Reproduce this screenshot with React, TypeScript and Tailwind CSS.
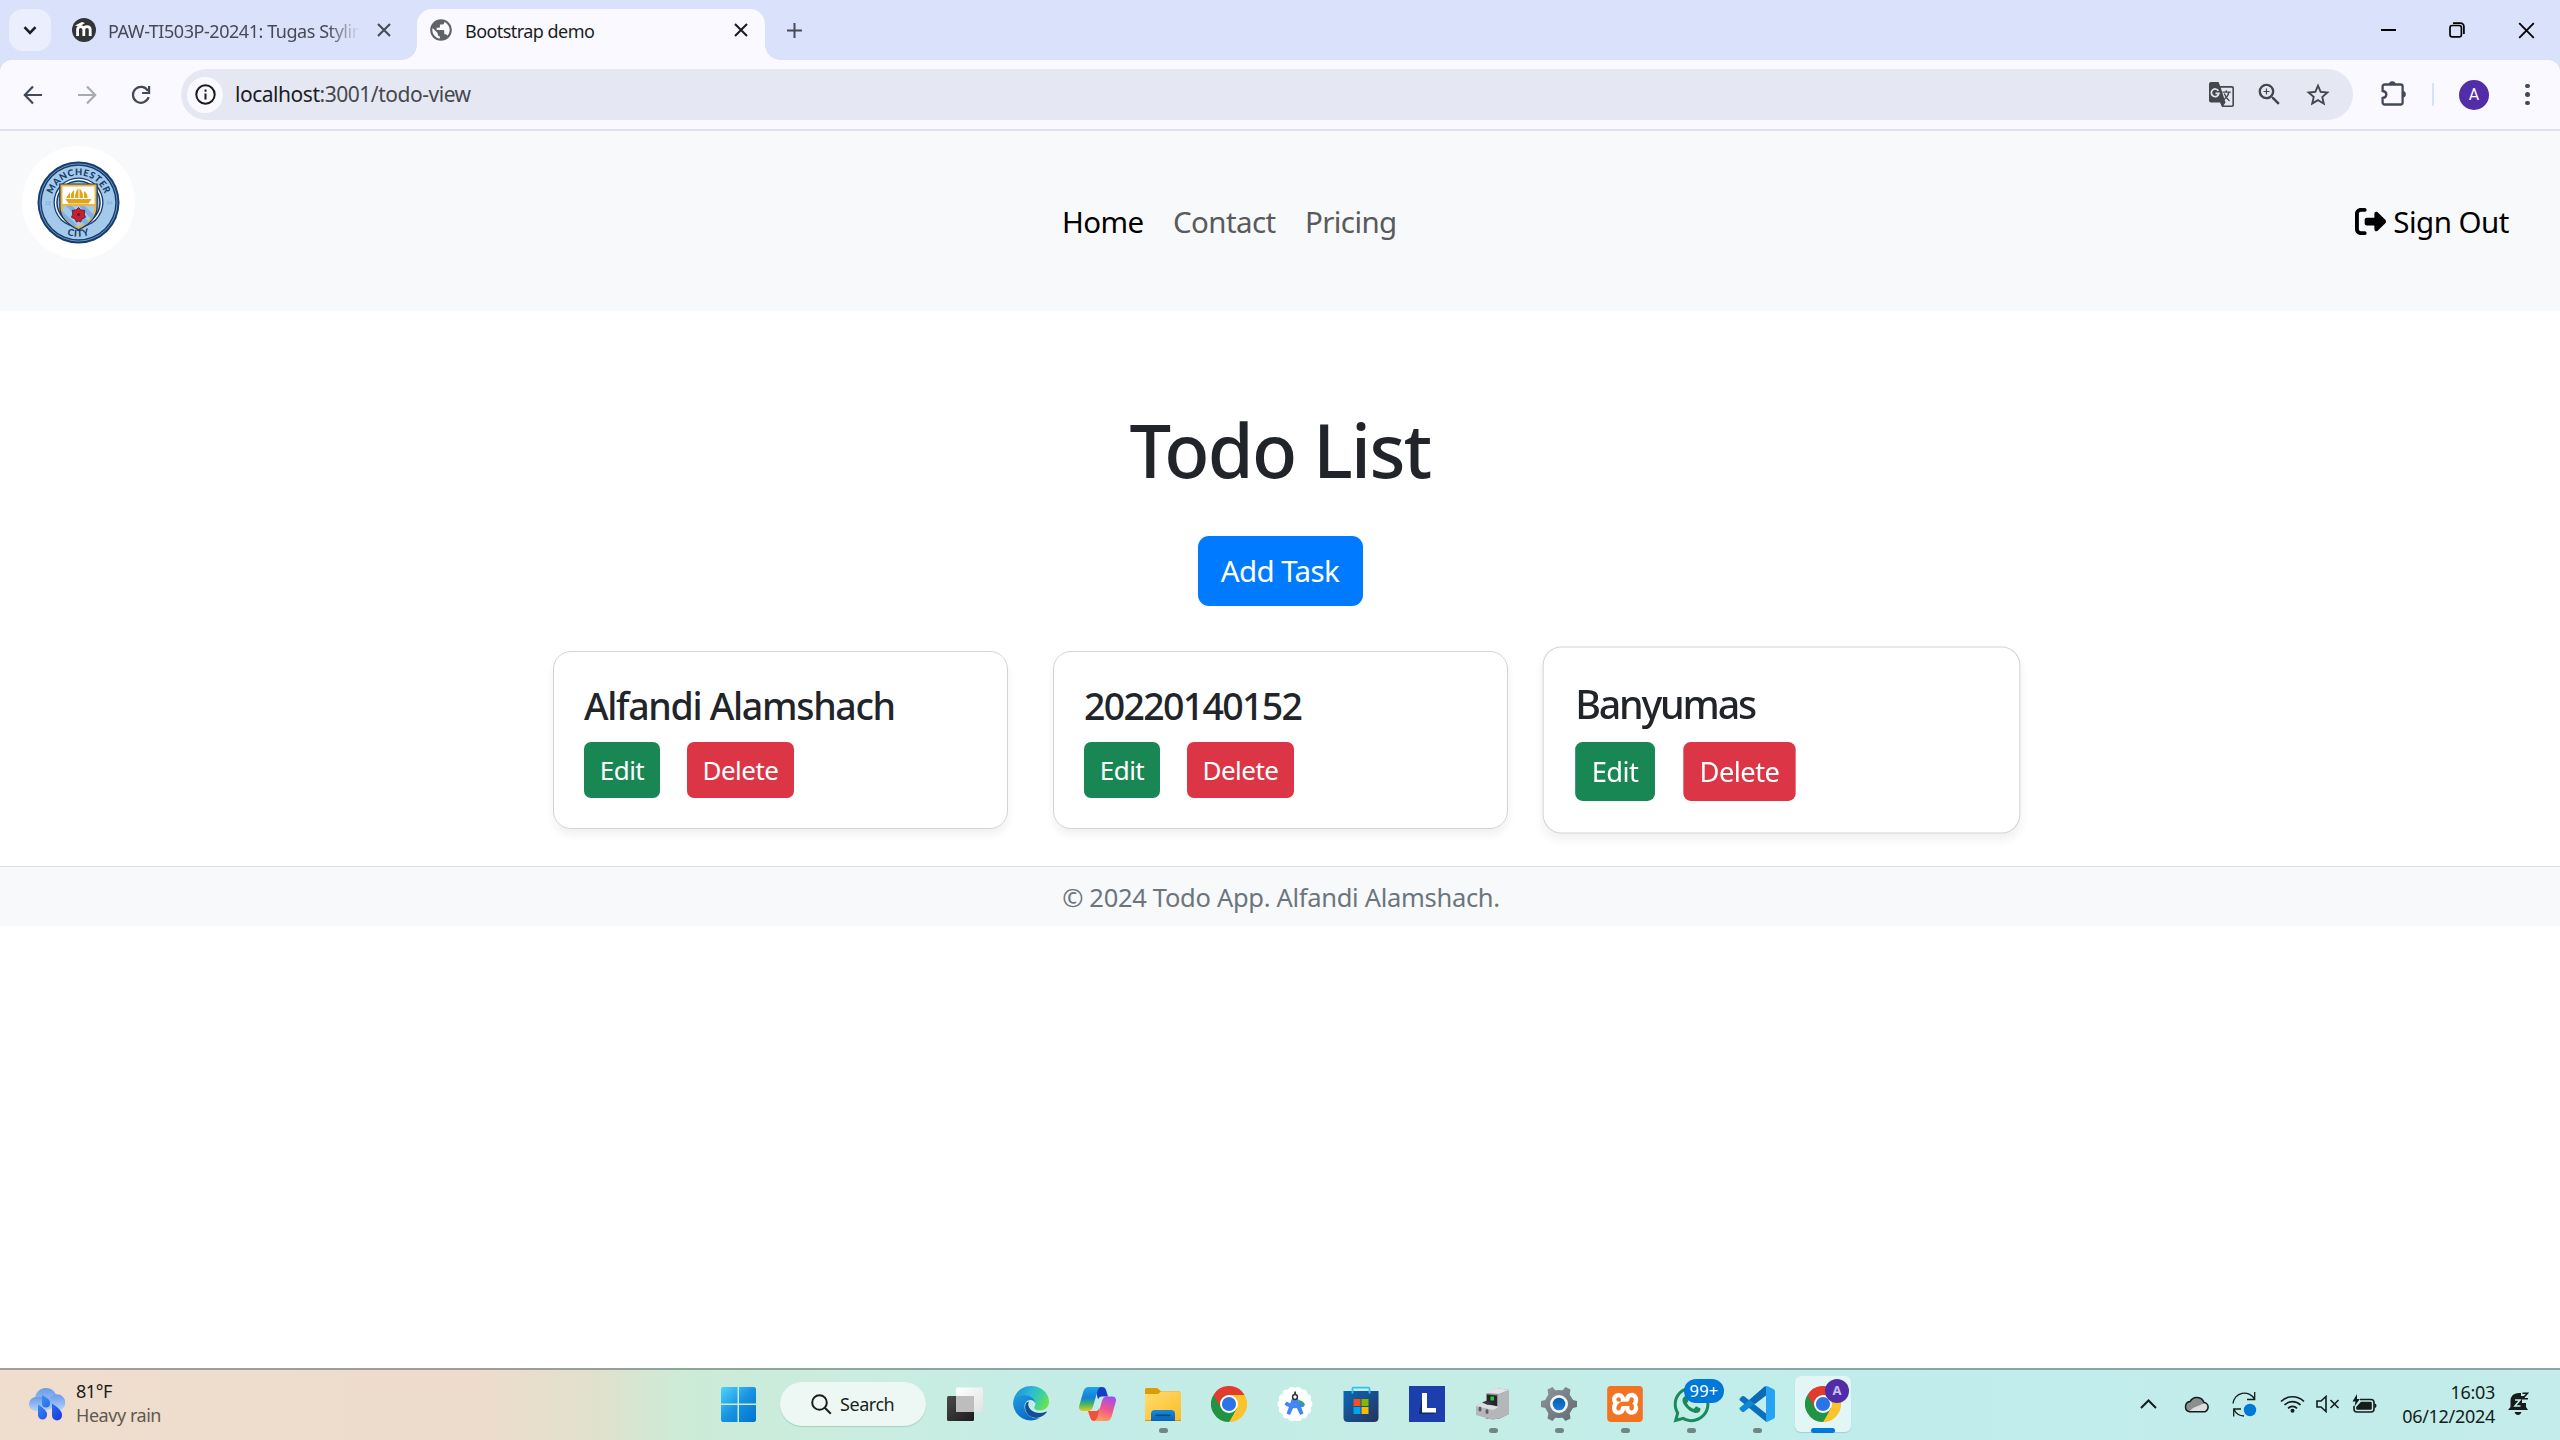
import React from "react";
import { MdPublic, MdStarBorder, MdZoomIn } from "react-icons/md";
import { FaRightFromBracket } from "react-icons/fa6";
import { FaWhatsapp } from "react-icons/fa";
import { SiXampp } from "react-icons/si";

/* ---------- browser chrome ---------- */

function CloseX({ size, stroke = 1.8, className = "" }: { size: number; stroke?: number; className?: string }) {
  return (
    <svg width={size} height={size} viewBox="0 0 14 14" className={className} fill="none" stroke="currentColor" strokeWidth={stroke}>
      <path d="M1 1l12 12M13 1L1 13" />
    </svg>
  );
}

function MoodleIcon() {
  return (
    <svg width="24" height="24" viewBox="0 0 24 24" className="shrink-0">
      <circle cx="12" cy="12" r="12" fill="#333436" />
      <path d="M5.6 18v-6.2c0-2 1.1-3.2 3-3.2s3.2 1.200 3.200 3.200V18m0-6.200c0-2 1.200-3.200 3.200-3.200s3.200 1.200 3.200 3.200V18" fill="none" stroke="#fff" strokeWidth="2.8" />
      <path d="M3 7.500L10 4l3 1-5.500 3.600z" fill="#fff" />
    </svg>
  );
}

function TranslateIcon() {
  return (
    <svg width="25" height="25" viewBox="0 0 25 25" className="mr-[21px]">
      <path d="M2 0h7.500l1.600 4H23q2 0 2 2v17q0 2-2 2H13l-2-4.500H2q-2 0-2-2V2Q0 0 2 0z" fill="#45474d" />
      <path d="M11.800 5.700H22.700q.7 0 .7.700V22.700q0 .7-.7.700H14.500l2-2.900z" fill="#e5e8f3" />
      <path d="M9.400 8.800A3.800 3.800 0 109.900 11.400H6.500" fill="none" stroke="#e5e8f3" strokeWidth="1.700" />
      <path d="M13.500 10.200h8.300M17.300 8.300v1.900M20 10.200q-1 4.500-5 7.300M15.300 11.500q1.500 4.500 5.200 7.500" fill="none" stroke="#45474d" strokeWidth="1.300" />
    </svg>
  );
}

function TabStrip() {
  return (
    <div className="flex h-[60px] bg-[#dae1fa]">
      <div className="ml-[9px] mt-[9px] flex h-[42px] w-[42px] items-center justify-center rounded-[14px] bg-[#ebeffd] text-[#1b1c1f]">
        <svg width="14" height="9" viewBox="0 0 14 9" fill="none" stroke="currentColor" strokeWidth="2.6">
          <path d="M1.500 1.200L7 6.800l5.500-5.600" />
        </svg>
      </div>
      <div className="ml-[21px] flex h-[60px] w-[345px] items-center text-[#474a55]">
        <MoodleIcon />
        <span className="ml-3 mt-[3px] w-[256px] whitespace-nowrap text-[18px] tracking-[-0.450px] [mask-image:linear-gradient(90deg,#000_220px,transparent_252px)]">
          PAW-TI503P-20241: Tugas Stylin
        </span>
        <CloseX size={14} stroke={2.100} className="ml-[13px]" />
      </div>
      <div className="relative mt-[9px] flex h-[51px] w-[348px] items-center rounded-t-[15px] bg-[#faf9ff] pb-[9px] text-[#1c1d22]">
        <span className="absolute -left-[15px] bottom-0 size-[15px] bg-[radial-gradient(circle_at_0_0,transparent_14.5px,#faf9ff_15px)]" />
        <span className="absolute -right-[15px] bottom-0 size-[15px] bg-[radial-gradient(circle_at_100%_0,transparent_14.5px,#faf9ff_15px)]" />
        <MdPublic className="ml-[11px] size-[26px] text-[#5f6368]" />
        <span className="ml-[11px] mt-[3px] w-[269px] text-[18px] tracking-[-0.550px]">Bootstrap demo</span>
        <CloseX size={14} stroke={2.100} />
      </div>
      <svg width="17" height="17" viewBox="0 0 17 17" className="ml-[21px] mt-[22px] text-[#474a55]" fill="none" stroke="currentColor" strokeWidth="2">
        <path d="M8.500 1v15M1 8.500h15" />
      </svg>
      <div className="ml-auto flex h-[60px] items-center pr-[25px] text-black">
        <svg width="15" height="2" className="mr-[53px]"><rect width="15" height="2" fill="currentColor" /></svg>
        <svg width="16" height="16" viewBox="0 0 16 16" className="mr-[53px]" fill="none" stroke="currentColor" strokeWidth="1.700">
          <rect x="1" y="3.500" width="11.400" height="11.400" rx="2.200" />
          <path d="M4 1.200h7.500a3.400 3.400 0 013.400 3.400V12" />
        </svg>
        <CloseX size={17} stroke={1.500} />
      </div>
    </div>
  );
}

function ArrowIcon({ flip = false, className }: { flip?: boolean; className: string }) {
  return (
    <svg width="20" height="20" viewBox="0 0 20 20" className={`${className} ${flip ? "-scale-x-100" : ""}`} fill="none" stroke="currentColor" strokeWidth="2.200">
      <path d="M10 1.500L1.800 10l8.200 8.500M2 10h17" />
    </svg>
  );
}

function Toolbar() {
  return (
    <div className="bg-[#dae1fa]">
      <div className="flex h-[71px] items-center rounded-t-[12px] border-b-2 border-[#dfe1ee] bg-[#faf9ff]">
        <ArrowIcon className="ml-[23px] text-[#43495a]" />
        <ArrowIcon flip className="ml-[34px] text-[#a9abb2]" />
        <svg width="20" height="20" viewBox="0 0 20 20" className="ml-[34px] text-[#43495a]" fill="none" stroke="currentColor" strokeWidth="2.200">
          <path d="M17.600 12.200A8 8 0 1117 6M18.100 1v7h-7" />
        </svg>
        <div className="ml-[30px] flex h-[51px] w-[2172px] items-center rounded-full bg-[#e5e8f3] pl-[6px]">
          <span className="flex size-9 items-center justify-center rounded-full bg-[#faf9ff] text-[#1b1c1f]">
            <svg width="21" height="21" viewBox="0 0 21 21" fill="none" stroke="currentColor" strokeWidth="2">
              <circle cx="10.500" cy="10.500" r="9.200" />
              <path d="M10.500 9.500v6M10.500 5.500v2.200" />
            </svg>
          </span>
          <span className="ml-[12px] text-[21px] tracking-[-0.470px] text-[#45474d]">
            <span className="text-[#1b1c1f]">localhost</span>:3001/todo-view
          </span>
          <div className="ml-auto flex items-center text-[#45474d]">
            <TranslateIcon />
            <MdZoomIn className="mr-[20px] size-[29px]" />
            <MdStarBorder className="mr-[21px] size-[28px]" />
          </div>
        </div>
        <svg width="26" height="26" viewBox="0 0 26 26" className="ml-[27px] -mt-[3px] text-[#43495a]">
          <path d="M2.600 6.500a2 2 0 012-2h16a2 2 0 012 2v16a2 2 0 01-2 2h-16a2 2 0 01-2-2v-4.500c5-.6 5-6.400 0-7z" fill="none" stroke="currentColor" strokeWidth="2.300" />
          <path d="M9 4.500a3.300 3.300 0 016.600 0zM22.500 11a3.300 3.300 0 010 6.600z" fill="currentColor" />
        </svg>
        <span className="ml-[26px] h-[23px] w-[2px] bg-[#d5e2fb]" />
        <span className="ml-[25px] flex size-[30px] items-center justify-center rounded-full bg-[#512da8] font-['Roboto'] text-[16px] text-white">A</span>
        <span className="ml-[36px] flex flex-col gap-[4px]">
          {[0, 1, 2].map((i) => (
            <span key={i} className="size-[4.500px] rounded-full bg-[#43495a]" />
          ))}
        </span>
      </div>
    </div>
  );
}

/* ---------- page ---------- */

function ClubBadge() {
  return (
    <svg width="113" height="113" viewBox="0 0 113 113">
      <defs>
        <path id="badge-top" d="M29.500 62a27.500 27.500 0 1154 0" />
        <path id="badge-bottom" d="M22.300 56.500a34.200 34.200 0 0068.400 0" />
        <clipPath id="badge-shield"><path d="M38.500 38.500h36v22q0 14-18 22.500q-18-8.500-18-22.500z" /></clipPath>
      </defs>
      <circle cx="56.500" cy="56.500" r="56.500" fill="#fff" />
      <circle cx="56.500" cy="56.500" r="41" fill="#163c6b" />
      <circle cx="56.500" cy="56.500" r="38.600" fill="none" stroke="#7fabd4" strokeWidth="0.800" />
      <circle cx="56.500" cy="56.500" r="36.800" fill="#a5c9ea" />
      <circle cx="56.500" cy="56.500" r="25" fill="#163c6b" />
      <circle cx="56.500" cy="56.500" r="23.700" fill="#fff" />
      <circle cx="56.500" cy="56.500" r="22.300" fill="#163c6b" />
      <circle cx="56.500" cy="56.500" r="20.800" fill="#a5c9ea" />
      <path d="M37.200 37.500h38.600v23q0 15-19.300 24q-19.300-9-19.300-24z" fill="#163c6b" />
      <path d="M38.500 38.500h36v22q0 14-18 22.500q-18-8.500-18-22.500z" fill="#e9b53c" />
      <g clipPath="url(#badge-shield)">
        <path d="M40.500 40.500h32v17.500h-32z" fill="#fff" />
        <path d="M40.500 60h32q0 14-16 21q-16-7-16-21z" fill="#a5c9ea" />
        <path d="M44 60h6l18 17-4 3zM57 60h6l9 9-2 5zM40 65l15 14-4 1-11-10z" fill="#7fb0de" />
      </g>
      <path d="M43.500 53h26l-3 4.500h-20zM44 52l4-6v6zM49 52q-1-5 3-8v8zM53 52q0-7 3.500-9.500V52zM57.500 52V42.500q4 3.500 3.500 9.500zM62 52v-7q4 2.500 3.500 7z" fill="#e3a41c" />
      <path d="M56.500 61.500l2.500 2.500 3.800.3-.6 3.800 1.300 3.200-3.400 1.500-1.600 3.300-2-1-2 1-1.600-3.300-3.400-1.500 1.300-3.200-.6-3.800 3.800-.3z" fill="#c8202f" stroke="#5c1c33" strokeWidth="0.900" />
      <circle cx="56.500" cy="68.500" r="1.500" fill="#5c1c33" />
      <g fontFamily="Lato, 'Noto Sans', sans-serif" fontWeight="900" fill="#163c6b" textAnchor="middle">
        <text fontSize="9.300" letterSpacing="0.600"><textPath href="#badge-top" startOffset="50%">MANCHESTER</textPath></text>
        <text fontSize="9.500" letterSpacing="0.500"><textPath href="#badge-bottom" startOffset="50%">CITY</textPath></text>
      </g>
      <g fontFamily="Lato, sans-serif" fontSize="5" fontWeight="700" fill="#84b2de" textAnchor="middle">
        <text x="26" y="58.500">18</text>
        <text x="87.500" y="58.500">94</text>
      </g>
    </svg>
  );
}

function Navbar() {
  return (
    <nav className="flex h-[180px] items-center bg-[#f8f9fb] text-[29.500px] leading-[40px]">
      <div className="ml-[22px] -mt-[38px] w-[113px]"><ClubBadge /></div>
      <div className="ml-[927px] mt-[2px] flex tracking-[-0.600px] text-[#595a5b]">
        <span className="w-[111px] text-black">Home</span>
        <span className="w-[132px]">Contact</span>
        <span className="w-[100px]">Pricing</span>
      </div>
      <div className="ml-auto mr-[51px] mt-[2px] flex items-center text-black">
        <FaRightFromBracket className="-mt-[1px] mr-[7px] size-[31px]" />
        <span className="tracking-[-0.500px]">Sign Out</span>
      </div>
    </nav>
  );
}

function TodoCard({ title, className = "", titleClass = "" }: { title: string; className?: string; titleClass?: string }) {
  return (
    <div className={`h-[178px] w-[455px] rounded-[18px] border border-[#d3d4d5] bg-white pl-[30px] pt-[34px] shadow-[0_6px_9px_rgba(0,0,0,0.06)] ${className}`}>
      <h5 className={`text-[37.500px] font-[540] leading-[40px] text-[#212529] ${titleClass}`}>{title}</h5>
      <div className="mt-[16px] flex gap-[27px] text-[26px] text-white">
        <button className="h-[56px] w-[76px] rounded-[7px] bg-[#198754] tracking-[-0.500px]">Edit</button>
        <button className="h-[56px] w-[107px] rounded-[7px] bg-[#dc3545] tracking-[-0.500px]">Delete</button>
      </div>
    </div>
  );
}

function Page() {
  return (
    <main className="flex flex-1 flex-col bg-white">
      <Navbar />
      <div className="flex flex-col items-center">
        <h1 className="mt-[94px] text-[74px] font-[550] leading-[90px] tracking-[-1.650px] text-[#212529]">Todo List</h1>
        <button className="mt-[41px] h-[70px] w-[165px] rounded-[11px] bg-[#007bff] text-[29.500px] tracking-[-0.600px] text-white">Add Task</button>
      </div>
      <div className="ml-[553px] mt-[45px] flex gap-[45px]">
        <TodoCard title="Alfandi Alamshach" titleClass="tracking-[-1.300px]" />
        <TodoCard title="20220140152" titleClass="tracking-[-1.700px]" />
        <TodoCard title="Banyumas" className="ml-px scale-105" titleClass="tracking-[-2.100px]" />
      </div>
      <footer className="mt-[37px] flex h-[60px] items-center justify-center border-t border-[#dcdddf] bg-[#f8f9fa] pl-[2px] pt-[2px] text-[25.500px] tracking-[-0.300px] text-[#6c757d]">
        © 2024 Todo App. Alfandi Alamshach.
      </footer>
    </main>
  );
}

/* ---------- taskbar icons ---------- */

function WeatherIcon() {
  return (
    <svg width="36" height="33" viewBox="0 0 36 33">
      <defs>
        <linearGradient id="w-cloud" x1="0" y1="0" x2="0" y2="1"><stop offset="0" stopColor="#6b9bea" /><stop offset="1" stopColor="#b5d1fb" /></linearGradient>
        <linearGradient id="w-drop" x1="0" y1="0" x2="1" y2="1"><stop offset="0" stopColor="#3b9bf5" /><stop offset="1" stopColor="#1836e0" /></linearGradient>
      </defs>
      <circle cx="17" cy="11" r="11" fill="url(#w-cloud)" />
      <rect x="0" y="9" width="22" height="14" rx="7" fill="url(#w-cloud)" />
      <circle cx="28" cy="14.500" r="8.300" fill="url(#w-cloud)" />
      <path d="M13 7q9 5 8 8.500a4 4 0 01-8 0zM9 16.500q10 6 9 10.500a4.500 4.500 0 01-9 0zM23 15.500q11 7 10 12a5 5 0 01-10 0z" fill="url(#w-drop)" />
    </svg>
  );
}

function StartIcon() {
  return (
    <svg width="35" height="35" viewBox="0 0 35 35">
      <defs><linearGradient id="st" gradientUnits="userSpaceOnUse" x1="0" y1="0" x2="35" y2="35"><stop offset="0" stopColor="#4fd3fd" /><stop offset="0.500" stopColor="#1893e0" /><stop offset="1" stopColor="#0072d0" /></linearGradient></defs>
      <path d="M1.500 0H16.500V16.500H0V1.500zM18 0h15.500L35 1.500V16.500H18zM0 18h16.500v17H1.500L0 33.500zM18 18h17v15.500L33.500 35H18z" fill="url(#st)" />
    </svg>
  );
}

function TaskViewIcon() {
  return (
    <svg width="36" height="34" viewBox="0 0 36 34">
      <defs>
        <linearGradient id="tv" x1="0" y1="0" x2="1" y2="1"><stop offset="0" stopColor="#4a4a4a" /><stop offset="1" stopColor="#1b1b1b" /></linearGradient>
        <linearGradient id="tv2" x1="0" y1="0" x2="1" y2="1"><stop offset="0" stopColor="#fff" /><stop offset="1" stopColor="#dfe3e2" /></linearGradient>
      </defs>
      <rect x="0" y="9" width="27" height="25" rx="1.500" fill="url(#tv)" />
      <rect x="9" y="0.500" width="27" height="24.500" rx="1.500" fill="url(#tv2)" />
      <path d="M9 9h18v16H10.500A1.500 1.500 0 019 23.500z" fill="#bdbdbd" />
    </svg>
  );
}

function EdgeIcon() {
  return (
    <svg width="36" height="36" viewBox="0 0 36 36">
      <defs>
        <linearGradient id="eg1" x1="0" y1="0.200" x2="1" y2="0.600"><stop offset="0" stopColor="#1d8fd8" /><stop offset="0.450" stopColor="#2cb9d6" /><stop offset="0.750" stopColor="#3fd29a" /><stop offset="1" stopColor="#6ae34c" /></linearGradient>
        <linearGradient id="eg2" x1="0" y1="0" x2="0.600" y2="1"><stop offset="0" stopColor="#1f9fe0" /><stop offset="1" stopColor="#0a66c6" /></linearGradient>
      </defs>
      <path d="M0 17C1 7 8.500 0 18 0c10.500 0 18 7.500 18 15.500 0 5.500-4 9-9 9-3.500 0-5.800-1.400-5.800-2.800 0-1 1.300-1.600 1.300-4.200 0-4-4-8-10-8C6 9.500 1.500 13 0 17z" fill="url(#eg1)" />
      <path d="M0 18c0-5 5-9 11.500-9 7 0 11 4.500 11 8.500 0 0-1.500-3.500-5-3.500-4.500 0-7 4.500-5.500 9.500 1.800 6.500 8.500 10 15 8.500A18 18 0 010 18z" fill="url(#eg2)" />
      <path d="M13.500 16.500c-2.500 3.500-1.500 10 3 13.300 5 3.600 12 2.700 17-3.300.5-.6 0-1.100-.7-.8-7.800 3.300-15.800-.2-17.300-5.700-.4-1.500-.3-3 .5-4.500z" fill="#114e97" />
    </svg>
  );
}

function CopilotIcon() {
  return (
    <svg width="37" height="34" viewBox="0 0 37 34">
      <defs>
        <linearGradient id="cp1" x1="0" y1="0" x2="0" y2="1"><stop offset="0" stopColor="#1ea5e8" /><stop offset="0.450" stopColor="#1280d8" /><stop offset="0.700" stopColor="#3fb36b" /><stop offset="1" stopColor="#e8c81c" /></linearGradient>
        <linearGradient id="cp2" x1="0.600" y1="0" x2="0.300" y2="1"><stop offset="0" stopColor="#a04ef0" /><stop offset="0.500" stopColor="#f0568c" /><stop offset="1" stopColor="#ffa05a" /></linearGradient>
      </defs>
      <path d="M16 0h7q3 0 4 3l2 6.500h-6q-3 0-4 3z" fill="#1440c4" />
      <path d="M9 24h9l3-3-2 9q-1 4-4 4-3 0-4-4z" fill="#f0503c" />
      <path d="M9.500 0H22q-2.500.5-3.500 4l-4.600 16q-1.200 4-4.900 4H4q-5 0-3.700-5.500L4.500 4Q6 0 9.500 0z" fill="url(#cp1)" />
      <path d="M27.500 34H15q2.500-.5 3.500-4l4.600-16.500q1.200-4 4.900-4h5q5 0 3.700 5.500L32.500 30q-1.500 4-5 4z" fill="url(#cp2)" />
    </svg>
  );
}

function FolderIcon() {
  return (
    <svg width="36" height="33" viewBox="0 0 36 33">
      <defs>
        <linearGradient id="fd" x1="0" y1="0" x2="1" y2="1"><stop offset="0" stopColor="#ffdc6e" /><stop offset="1" stopColor="#fbbd28" /></linearGradient>
        <linearGradient id="fb" x1="0" y1="0" x2="0" y2="1"><stop offset="0" stopColor="#1a8ad6" /><stop offset="1" stopColor="#0a63b4" /></linearGradient>
      </defs>
      <path d="M0 1.500Q0 0 1.500 0H11q1.500 0 2.500 1l2.500 2.500h18.500Q36 3.500 36 5v8H0z" fill="#dd9b06" />
      <path d="M0 6h13l3-2.200h19q1 0 1 1V32H0z" fill="url(#fd)" />
      <rect x="0" y="32" width="36" height="1" fill="#d9980a" />
      <path d="M6 33v-7q0-4 4-4h16q4 0 4 4v7z" fill="url(#fb)" />
      <rect x="10.500" y="26.500" width="15" height="1.800" rx="0.900" fill="#0a4a86" />
    </svg>
  );
}

function ChromeIcon() {
  return (
    <svg width="36" height="36" viewBox="0 0 36 36">
      <circle cx="18" cy="18" r="17.500" fill="#229342" />
      <path d="M18 9h15.600A18 18 0 0118 36l7.800-13.500z" fill="#fcc32a" />
      <path d="M2.400 9A18 18 0 0133.600 9H18a9 9 0 00-7.800 13.500L2.400 9z" fill="#e33b2e" />
      <path d="M2.400 9L10.200 22.500A9 9 0 0018 27h5.200L18 36A18 18 0 012.400 9z" fill="#229342" />
      <circle cx="18" cy="18" r="9" fill="#fff" />
      <circle cx="18" cy="18" r="7.100" fill="#2b74e8" />
    </svg>
  );
}

function AndroidStudioIcon() {
  const bumps = Array.from({ length: 14 }, (_, i) => (i * Math.PI * 2) / 14);
  return (
    <svg width="36" height="36" viewBox="0 0 36 36">
      <circle cx="18" cy="18" r="15.800" fill="#fff" />
      {bumps.map((a) => (
        <circle key={a} cx={18 + 13.500 * Math.cos(a)} cy={18 + 13.500 * Math.sin(a)} r="3.900" fill="#fff" />
      ))}
      <path d="M22 14q5 1 6 5l-2 2h-4z" fill="#34a853" />
      <path d="M8.500 17q8 6 17.500 1.500" fill="none" stroke="#4285f4" strokeWidth="3.800" />
      <path d="M15.500 11h5l6 16.500-3.400 1.500L18 18l-5 11-3.400-1.500z" fill="#4285f4" />
      <path d="M17.200 5.500h1.800v4h-1.800z" fill="#3a3a3a" />
      <circle cx="18" cy="11" r="2.400" fill="#fff" stroke="#333" strokeWidth="1.500" />
    </svg>
  );
}

function StoreIcon() {
  return (
    <svg width="36" height="36" viewBox="0 0 36 36">
      <defs><linearGradient id="so" x1="0" y1="0" x2="1" y2="1"><stop offset="0" stopColor="#0a69b8" /><stop offset="1" stopColor="#27315c" /></linearGradient></defs>
      <path d="M.5 5h35v26.500q0 4.500-4.500 4.500H5Q.5 36 .5 31.500z" fill="url(#so)" />
      <path d="M9.500 7.500v-5q0-.8.8-.8h15.400q.8 0 .8.800v5" fill="none" stroke="#2fc3f4" strokeWidth="1.800" />
      <path d="M10.500 13H17.500v7h-7z" fill="#f25022" /><path d="M18.500 13h7v7h-7z" fill="#7fba00" />
      <path d="M10.500 21H17.500v7h-7z" fill="#00a4ef" /><path d="M18.500 21h7v7h-7z" fill="#ffb900" />
    </svg>
  );
}

function LetterTile() {
  return (
    <svg width="36" height="36" viewBox="0 0 36 36">
      <path d="M0 0h36v36H0z" fill="#1d3fae" />
      <path d="M13 12L10 28h14l3-2H13z" fill="#0b2c55" />
      <path d="M13 7h5v15h9v4.500H13z" fill="#fff" />
    </svg>
  );
}

function DeviceIcon() {
  return (
    <svg width="34" height="32" viewBox="0 0 34 32">
      <path d="M10 6L20 0l13 2v24l-10 5H10z" fill="#8f9196" />
      <path d="M10 5L20 0l13 2-10 4z" fill="#e3e4e6" />
      <path d="M22 6.500L33 2v24l-11 5z" fill="#b4b6ba" />
      <path d="M11 6.500l10 1V18L11 16.500z" fill="#23272b" />
      <rect x="14.500" y="8.500" width="3.500" height="4" fill="#28c840" />
      <path d="M0 18l5-3 18 4v11l-6 2L0 27z" fill="#b4b6b9" />
      <path d="M0 18l5-3 18 4-6 3z" fill="#dcdddf" />
      <path d="M6 14.500l5-2 6 2.500-5 2z" fill="#34383c" />
      <ellipse cx="4" cy="21" rx="1.500" ry="2.500" fill="#595c60" /><ellipse cx="11" cy="23.500" rx="1.500" ry="2.500" fill="#595c60" />
    </svg>
  );
}

function SettingsIcon() {
  return (
    <svg width="36" height="36" viewBox="0 0 36 36">
      <defs>
        <linearGradient id="sg" x1="0" y1="0" x2="1" y2="1"><stop offset="0" stopColor="#8e959c" /><stop offset="1" stopColor="#626a72" /></linearGradient>
        <linearGradient id="sb" x1="0" y1="0" x2="0" y2="1"><stop offset="0" stopColor="#0a5ba8" /><stop offset="1" stopColor="#1380dc" /></linearGradient>
      </defs>
      <g fill="url(#sg)">
        <circle cx="18" cy="18" r="14" />
        <path d="M6.500 3.500l5-2.500 3.500 4h6l3.500-4 5 2.500-1 6 3.500 4.500 4 1v6l-4 1-3.500 4.500 1 6-5 2.500-3.500-4h-6l-3.500 4-5-2.500 1-6L4.500 22 0 21v-6l4.500-1L7.500 9.500z" />
      </g>
      <circle cx="18" cy="18" r="9" fill="#f2f4f6" />
      <circle cx="18" cy="18" r="6.300" fill="url(#sb)" />
    </svg>
  );
}

function VsCodeIcon() {
  return (
    <svg width="36" height="36" viewBox="0 0 36 36">
      <path d="M.8 12.500L3 10.300q1-.8 2.200 0L27 27.500v8.200L1 14.500q-1-1 -.2-2z" fill="#0a70bd" />
      <path d="M.8 23.500L3 25.700q1 .8 2.200 0L27 8.500V.3L1 21.500q-1 1-.2 2z" fill="#0f87d4" />
      <path d="M27 0.500L27 9.500 16 18l-5.500-4.300L25.500.5z" fill="#0a6ab5" />
      <path d="M27 .2q.8-.3 1.500 0l6.200 3Q36 4 36 5.500v25q0 1.500-1.300 2.300l-6.200 3q-.8.3-1.500 0z" fill="#26a3f2" />
    </svg>
  );
}

function XamppIcon() {
  return (
    <span className="relative flex size-9 items-center justify-center">
      <span className="absolute size-[30px] bg-white" />
      <SiXampp className="relative size-9 text-[#f27321]" />
    </span>
  );
}

function WhatsAppIcon() {
  return (
    <span className="relative flex size-9 items-center justify-center">
      <FaWhatsapp className="size-[41px] shrink-0 text-[#1b8a5a]" />
      <span className="absolute -top-[7px] left-[11px] flex h-[24px] w-[40px] items-center justify-center rounded-[12px] bg-[#0078d7] text-[16.500px] tracking-[0.200px] text-white">99+</span>
    </span>
  );
}

function AppSlot({ children, running = false }: { children: React.ReactNode; running?: boolean }) {
  return (
    <div className="relative flex h-[70px] w-[66px] items-center justify-center pb-[2px]">
      {children}
      {running && <span className="absolute bottom-[7px] left-[28.500px] h-[5px] w-[9px] rounded-full bg-[#708784]" />}
    </div>
  );
}

function Tray() {
  return (
    <div className="ml-auto flex h-[70px] items-center pb-[2px] text-[#151c1c]">
      <svg width="17" height="10" viewBox="0 0 17 10" className="mr-[27px]" fill="none" stroke="currentColor" strokeWidth="2"><path d="M1 9l7.500-7.500L16 9" /></svg>
      <svg width="25" height="17" viewBox="0 0 25 17" className="mr-[23px]">
        <path d="M5.500 15.800h13.500a4.600 4.600 0 001-9.200A7.600 7.600 0 006 5.600a5.200 5.200 0 00-.5 10.200z" fill="#8c8f8f" />
        <path d="M5 15.500h14a4.600 4.600 0 002-8.500L9 12z" fill="#dcdede" />
        <path d="M5.500 15.800h13.500a4.600 4.600 0 001-9.200A7.600 7.600 0 006 5.600a5.200 5.200 0 00-.5 10.200z" fill="none" stroke="#151c1c" strokeWidth="1.500" />
      </svg>
      <svg width="25" height="25" viewBox="0 0 25 25" className="mr-[23px]" fill="none" stroke="currentColor" strokeWidth="1.300">
        <path d="M1 11.500A11.500 11.500 0 0122.500 7M22.700 0v7.500H15M2 17.500A11.500 11.500 0 0012 24M1.700 24.500v-7.500H9" />
        <circle cx="18" cy="18" r="6.200" fill="#0078d7" stroke="none" />
      </svg>
      <svg width="25" height="18" viewBox="0 0 25 18" className="mr-[11px]" fill="none" stroke="currentColor" strokeWidth="1.700">
        <path d="M1 6.500a16.300 16.300 0 0123 0M4.500 10a11.300 11.300 0 0116 0M8 13.300a6.400 6.400 0 019 0" />
        <circle cx="12.500" cy="15.800" r="2" fill="currentColor" stroke="none" />
      </svg>
      <svg width="24" height="18" viewBox="0 0 24 18" className="mr-[12px]" fill="none" stroke="currentColor" strokeWidth="1.600">
        <path d="M1 6h4l5-4.500v15L5 12H1zM14.500 5l8 8M22.500 5l-8 8" />
      </svg>
      <svg width="25" height="20" viewBox="0 0 25 20" className="mr-[26px]">
        <path d="M8 5.500h11a3 3 0 013 3V15a3 3 0 01-3 3H5a3 3 0 01-3-3v-3" fill="none" stroke="#151c1c" strokeWidth="1.600" />
        <path d="M9 7.800h9.500q1.300 0 1.300 1.300v5.400q0 1.300-1.300 1.300h-13q-1.300 0-1.300-1.300V13zM22.500 9.500q2 0 2 2.200t-2 2.200zM5 0L.5 7.500H3.500L2.500 12.500 7.800 5H5z" fill="#151c1c" />
      </svg>
      <div className="-mt-[1px] w-[92px] whitespace-nowrap text-right text-[18px] leading-[24px] tracking-[-0.300px]">
        <div>16:03</div>
        <div className="-ml-1">06/12/2024</div>
      </div>
      <svg width="21" height="24" viewBox="0 0 21 24" className="ml-[13px] mr-[31px]">
        <path d="M2.500 9q0-7.500 8-8L13 1v3h3.500v3H14v4h4v4l2 3H0l2.500-3zM6.500 20h7q-1 3-3.500 3t-3.500-3z" fill="#151c1c" />
        <path d="M7 8h5l-5 6h5.500" fill="none" stroke="#c3ecea" strokeWidth="1.600" />
        <path d="M14.500 1.200h5l-5 5.600h5.500" fill="none" stroke="#151c1c" strokeWidth="1.600" />
      </svg>
    </div>
  );
}

function Taskbar() {
  return (
    <div className="flex h-[72px] border-t-2 border-[#5f6a68]/55 bg-[linear-gradient(90deg,#efdecd_0px,#eddccb_480px,#dfe1cc_600px,#cdebd6_680px,#c9ede0_860px,#c3ece8_1110px,#c5ede5_1420px,#c0edec_1850px,#c3ecea_2560px)]">
      <div className="flex h-[70px] w-[688px] items-center pb-[2px] pl-[29px]">
        <WeatherIcon />
        <div className="-mt-[2px] ml-[11px] text-[18px] leading-[24px] tracking-[-0.450px]">
          <div className="text-[#1b1b1a]">81°F</div>
          <div className="text-[#5f5850]">Heavy rain</div>
        </div>
      </div>
      <div className="flex">
        <div className="flex h-[70px] items-center pb-[2px] pl-[33px]"><StartIcon /></div>
        <div className="ml-[24px] mr-[6px] mt-[12px] flex h-[44px] w-[146px] items-center rounded-full bg-[#edf8f5] pl-[31px] text-[18px] text-[#1a1f1e] shadow-[0_1px_1px_rgba(60,120,105,0.25)]">
          <svg width="21" height="21" viewBox="0 0 21 21" fill="none" stroke="currentColor" strokeWidth="2"><circle cx="8.500" cy="8.500" r="7.300" /><path d="M13.500 13.500l6.300 6.300" /></svg>
          <span className="ml-[8px] tracking-[-0.450px]">Search</span>
        </div>
        <AppSlot><TaskViewIcon /></AppSlot>
        <AppSlot><EdgeIcon /></AppSlot>
        <AppSlot><CopilotIcon /></AppSlot>
        <AppSlot running><FolderIcon /></AppSlot>
        <AppSlot><ChromeIcon /></AppSlot>
        <AppSlot><AndroidStudioIcon /></AppSlot>
        <AppSlot><StoreIcon /></AppSlot>
        <AppSlot><LetterTile /></AppSlot>
        <AppSlot running><DeviceIcon /></AppSlot>
        <AppSlot running><SettingsIcon /></AppSlot>
        <AppSlot running><XamppIcon /></AppSlot>
        <AppSlot running><WhatsAppIcon /></AppSlot>
        <AppSlot running><VsCodeIcon /></AppSlot>
        <div className="relative ml-[5px] mt-[6px] flex h-[56px] w-[56px] items-center justify-center rounded-[6px] bg-[#e2f6f5] shadow-[0_1px_1px_rgba(60,120,120,0.25)]">
          <ChromeIcon />
          <span className="absolute left-[30px] top-[3px] flex size-6 items-center justify-center rounded-full bg-[#512da8] text-[13px] font-bold text-[#cbbdf0]">A</span>
          <span className="absolute bottom-[-1px] left-4 h-[5px] w-6 rounded-full bg-[#0078d7]" />
        </div>
      </div>
      <Tray />
    </div>
  );
}

export default function App() {
  return (
    <div className="flex h-[1440px] w-[2560px] flex-col overflow-hidden font-['Noto_Sans','Open_Sans',sans-serif]">
      <TabStrip />
      <Toolbar />
      <Page />
      <Taskbar />
    </div>
  );
}
